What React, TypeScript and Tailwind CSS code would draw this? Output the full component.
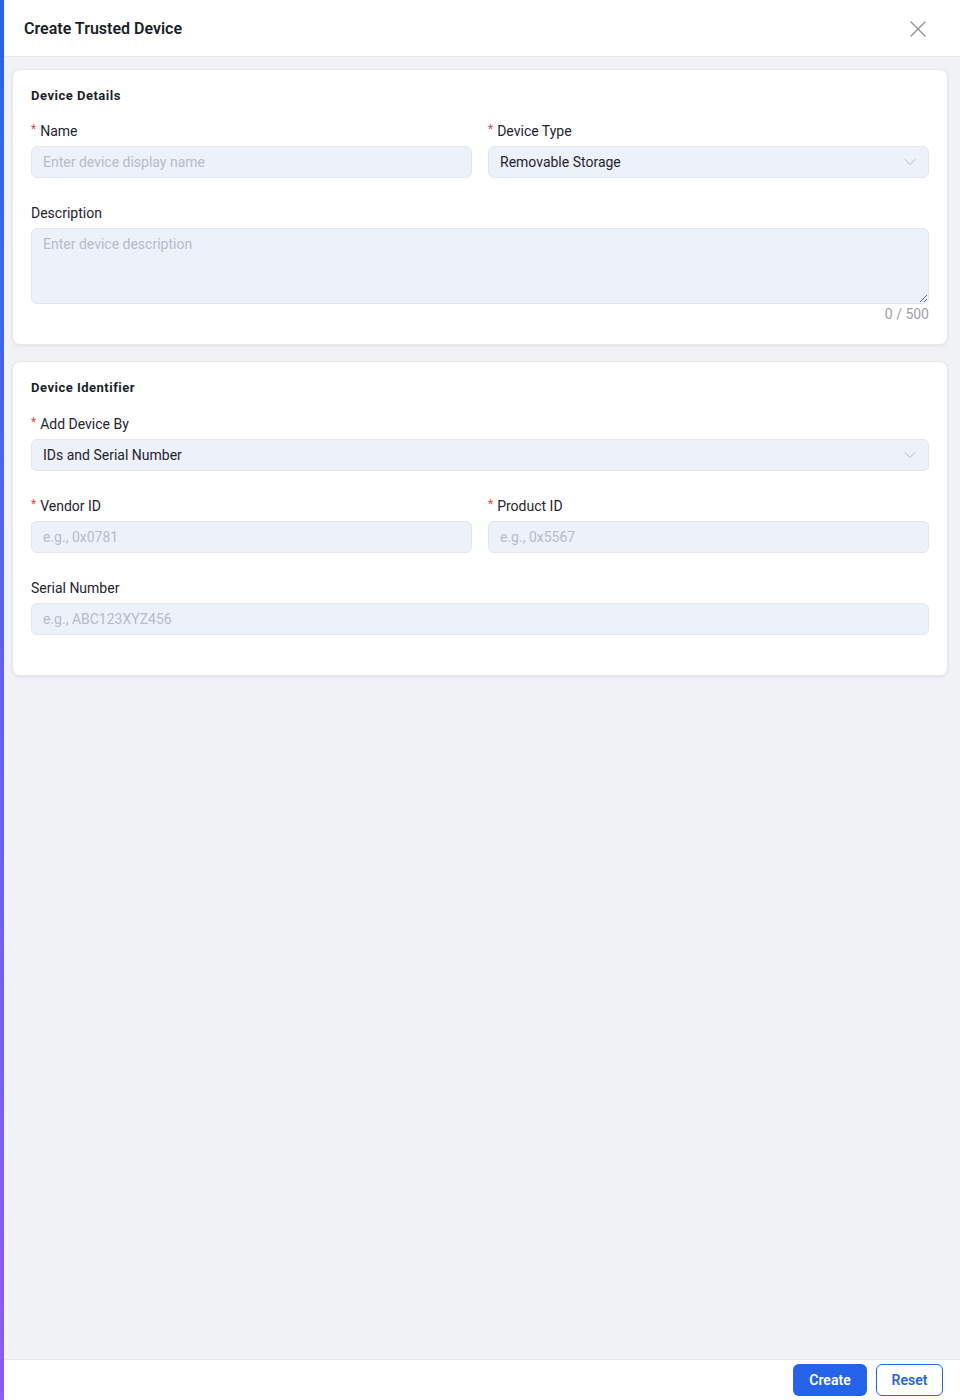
import { ChevronDown, X } from 'lucide-react'

const font = { fontFamily: 'Roboto, "Noto Sans", sans-serif' }

function Label({ text, required }: { text: string; required?: boolean }) {
  return (
    <div className="flex items-center h-[22px] mb-1 text-[14px] text-[#1f2430]">
      {required && <span className="text-[#ef4444] text-[12px] mr-1 -mt-1">*</span>}
      {text}
    </div>
  )
}

function Input({ placeholder }: { placeholder: string }) {
  return (
    <input
      placeholder={placeholder}
      className="w-full h-8 px-[11px] rounded-md border border-[#e1e6ef] bg-[#edf1f9] text-[14px] text-[#1f2430] placeholder:text-[#b6bcc8] outline-none"
    />
  )
}

function Select({ value }: { value: string }) {
  return (
    <div className="w-full h-8 pl-[11px] pr-2 rounded-md border border-[#e1e6ef] bg-[#edf1f9] flex items-center justify-between text-[14px] text-[#1f2430]">
      <span>{value}</span>
      <ChevronDown size={20} strokeWidth={1} className="text-[#aab0bb]" />
    </div>
  )
}

function Card({ title, children }: { title: string; children: React.ReactNode }) {
  return (
    <section className="bg-white rounded-lg border border-[#e6e8ec] shadow-[0_1px_3px_rgba(0,0,0,0.08)] px-[18px] pt-[18px] pb-[20px]">
      <h2 className="text-[13px] font-bold tracking-[0.5px] text-[#1a1f2b] leading-4 mb-4">{title}</h2>
      {children}
    </section>
  )
}

export default function App() {
  return (
    <div className="h-screen w-full flex bg-white" style={font}>
      <div className="w-1 shrink-0 bg-gradient-to-b from-[#2563eb] to-[#8b5cf6]" />
      <div className="flex-1 flex flex-col min-w-0">
        <header className="h-[57px] shrink-0 flex items-center justify-between pl-5 pr-7 pt-px border-b border-[#e5e7eb]">
          <h1 className="text-[16px] font-semibold text-[#1a1f2b]">Create Trusted Device</h1>
          <X size={28} strokeWidth={1.1} className="text-[#8a8f98]" />
        </header>

        <main className="flex-1 bg-[#f0f2f5] pl-2 pr-3 pt-3 flex flex-col gap-4">
          <Card title="Device Details">
            <div className="grid grid-cols-2 gap-x-4">
              <div>
                <Label text="Name" required />
                <Input placeholder="Enter device display name" />
              </div>
              <div>
                <Label text="Device Type" required />
                <Select value="Removable Storage" />
              </div>
            </div>
            <div className="mt-6">
              <Label text="Description" />
              <textarea
                placeholder="Enter device description"
                className="block w-full h-[76px] px-[11px] py-[5px] rounded-md border border-[#e1e6ef] bg-[#edf1f9] text-[14px] text-[#1f2430] placeholder:text-[#b6bcc8] outline-none resize-y"
              />
              <div className="text-right text-[14px] text-[#9ca1aa] leading-5">0 / 500</div>
            </div>
          </Card>

          <Card title="Device Identifier">
            <div className="pt-px">
              <Label text="Add Device By" required />
              <Select value="IDs and Serial Number" />
            </div>
            <div className="grid grid-cols-2 gap-x-4 mt-6">
              <div>
                <Label text="Vendor ID" required />
                <Input placeholder="e.g., 0x0781" />
              </div>
              <div>
                <Label text="Product ID" required />
                <Input placeholder="e.g., 0x5567" />
              </div>
            </div>
            <div className="mt-6 mb-[20px]">
              <Label text="Serial Number" />
              <Input placeholder="e.g., ABC123XYZ456" />
            </div>
          </Card>
        </main>

        <footer className="h-[41px] shrink-0 border-t border-[#e5e7eb] bg-white flex items-center justify-end gap-[9px] pr-[17px]">
          <button className="h-8 w-[74px] rounded-md bg-[#2563eb] text-white text-[14px] font-semibold">Create</button>
          <button className="h-8 w-[67px] rounded-md border border-[#2563eb] bg-white text-[#2563eb] text-[14px] font-semibold">
            Reset
          </button>
        </footer>
      </div>
    </div>
  )
}
